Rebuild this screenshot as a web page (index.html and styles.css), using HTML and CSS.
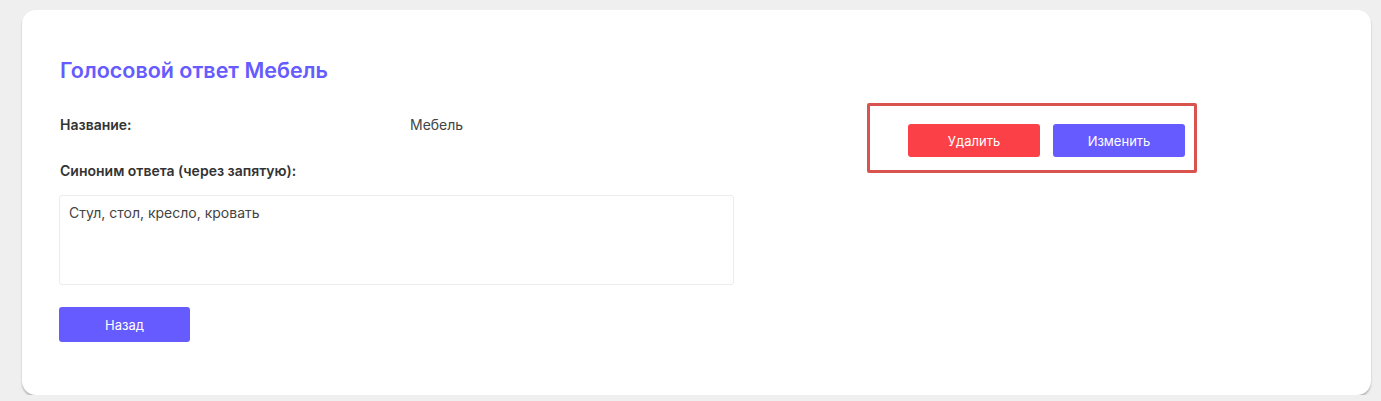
FILE: index.html
```html
<!DOCTYPE html>
<html lang="ru">
<head>
    <meta charset="UTF-8">
    <meta name="viewport" content="width=device-width, initial-scale=1.0">
    <title>Голосовой ответ Мебель</title>
    <link rel="stylesheet" href="styles.css">
</head>
<body>
    <div class="card">
        <h1 class="card-title">Голосовой ответ Мебель</h1>

        <div class="card-body">
            <div class="details">
                <div class="field-row">
                    <span class="field-label">Название:</span>
                    <span class="field-value">Мебель</span>
                </div>

                <div class="field-label synonyms-label">Синоним ответа (через запятую):</div>
                <div class="synonyms-box">Стул, стол, кресло, кровать</div>

                <button class="btn btn-primary back-btn">Назад</button>
            </div>

            <div class="actions">
                <button class="btn btn-danger">Удалить</button>
                <button class="btn btn-primary">Изменить</button>
            </div>
        </div>
    </div>
</body>
</html>
```

FILE: styles.css
```css
body {
    margin: 0;
    padding: 10px 10px 0 22px;
    font-family: Inter, "Open Sans", sans-serif;
    background-color: #efefef;
    color: #333;
}

.card {
    background: #fff;
    border-radius: 14px;
    box-shadow: 0 2px 2px rgba(0, 0, 0, 0.25);
    padding: 47px 37px 53px;
}

.card-title {
    margin: 0 0 20px 1px;
    font-size: 21.5px;
    line-height: 26px;
    font-weight: 600;
    color: #665bff;
}

.card-body {
    display: flex;
    align-items: flex-start;
}

.details {
    width: 675px;
    padding-top: 14px;
}

.field-row {
    display: flex;
    line-height: 16px;
    margin-left: 1px;
}

.field-label {
    font-size: 14px;
    font-weight: 600;
    color: #333;
}

.field-row .field-label {
    width: 350px;
}

.field-value {
    font-size: 14px;
    color: #444;
}

.synonyms-label {
    margin: 30px 0 16px 1px;
    line-height: 16px;
}

.synonyms-box {
    height: 90px;
    border: 1px solid #ececec;
    border-radius: 3px;
    padding: 0 9px;
    font-size: 14px;
    line-height: 34px;
    color: #444;
    box-sizing: border-box;
}

.btn {
    border: none;
    border-radius: 3px;
    color: #fff;
    font-family: inherit;
    font-size: 13px;
    width: 132px;
    height: 33px;
    cursor: pointer;
}

.btn-primary {
    background: #665bff;
}

.btn-danger {
    background: #fb4147;
}

.back-btn {
    margin-top: 22px;
    width: 131px;
    height: 35px;
}

.actions {
    display: flex;
    gap: 13px;
    margin-left: 133px;
    padding: 18px 9px 13px 38px;
    border: 3px solid #d9534f;
    border-radius: 2px;
}
```
